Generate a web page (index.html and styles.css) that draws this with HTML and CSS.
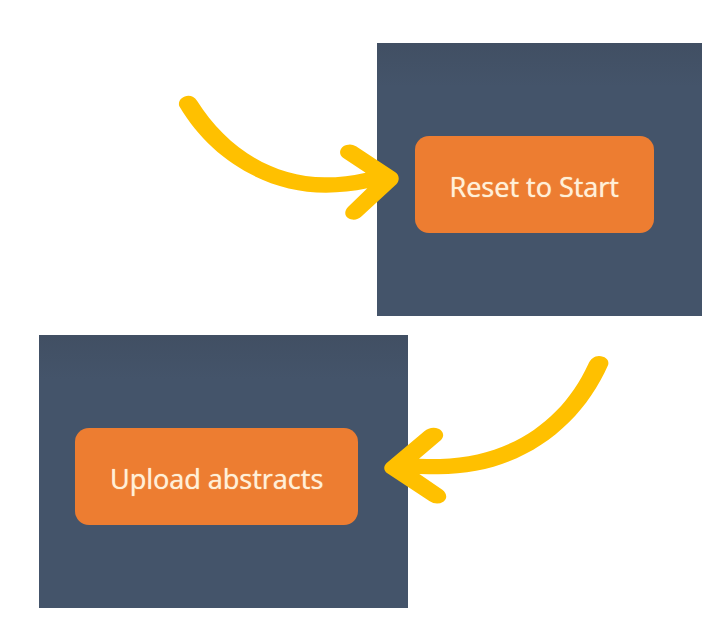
FILE: index.html
```html
<!DOCTYPE html>
<html lang="en">
<head>
<meta charset="utf-8">
<meta name="viewport" content="width=device-width, initial-scale=1">
<title>Upload and reset</title>
<link rel="stylesheet" href="styles.css">
</head>
<body>
<main class="steps">
  <section class="panel panel-reset">
    <button class="action" type="button">Reset to Start</button>
    <svg class="arrow arrow-right" viewBox="0 0 720 450" aria-hidden="true">
      <path d="M28 79C22 62 38 47 55 47Q71 47 81 62C165 195 300 292 465 292Q528 292 587 278L519 233C502 220 511 196 535 194Q546 192 558 199L676 277C689 286 689 302 679 313L575 409C562 422 545 421 534 414C523 406 523 392 534 381L592 325Q530 338 468 338C285 338 120 235 28 79Z"/>
    </svg>
  </section>
  <section class="panel panel-upload">
    <button class="action" type="button">Upload abstracts</button>
    <svg class="arrow arrow-left" viewBox="0 0 750 510" aria-hidden="true">
      <path d="M655 57C661 42 673 33 687 33C708 34 719 46 714 61C635 240 460 388 205 388Q177 388 148 387L217 434C231 445 233 461 220 470Q200 482 178 468L52 385C40 377 40 363 50 354L163 259Q178 246 198 249C219 253 226 272 213 285L147 341Q185 343 210 342C430 335 580 220 655 57Z"/>
    </svg>
  </section>
</main>
</body>
</html>
```
FILE: styles.css
```css
* {
  box-sizing: border-box;
}

body {
  margin: 0;
  background: #fff;
  font-family: "Open Sans", "Noto Sans", sans-serif;
}

.steps {
  display: flex;
  flex-direction: column;
  gap: 19px;
  padding: 43px 20px 14px 39px;
}

.panel {
  position: relative;
  background: linear-gradient(#414f63, #44546a 44px);
}

.panel-reset {
  align-self: flex-end;
  padding: 93px 48px 83px 38px;
}

.panel-upload {
  align-self: flex-start;
  padding: 93px 50px 83px 36px;
}

.action {
  display: block;
  padding: 33px 35px 28px;
  border: 0;
  border-radius: 14px;
  background: #ed7d31;
  color: #fff0d8;
  font: inherit;
  font-size: 27px;
  font-weight: 500;
  line-height: 36px;
  text-shadow: 0 0 1px #fff0d8;
  white-space: nowrap;
}

.arrow {
  position: absolute;
  fill: #ffc000;
}

.arrow-right {
  top: 37px;
  right: 292px;
  width: 240px;
}

.arrow-left {
  top: 10px;
  left: 331px;
  width: 250px;
}
```
